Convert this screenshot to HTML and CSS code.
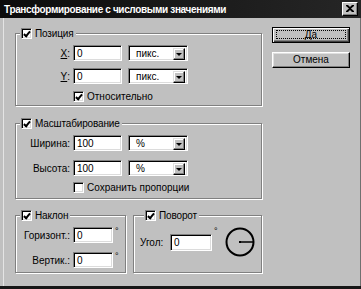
FILE: index.html
```html
<!DOCTYPE html>
<html lang="ru">
<head>
<meta charset="utf-8">
<title>Трансформирование с числовыми значениями</title>
<link rel="stylesheet" href="styles.css">
</head>
<body>
<div class="window">
  <div class="titlebar">
    <span class="title">Трансформирование с числовыми значениями</span>
    <span class="close"><svg width="8" height="7" viewBox="0 0 8 7"><path d="M0 0h2l2 2 2-2h2v1L5 3.5 8 6v1H6L4 5 2 7H0V6l3-2.5L0 1z" fill="#000"/></svg></span>
  </div>
  <div class="body">
    <div class="groups">
      <fieldset class="group g-pos">
        <legend class="legend"><span class="check on"></span><span>Позиция</span></legend>
        <div class="row">
          <span class="lab"><u>X</u>:</span>
          <span class="field f-wide">0</span>
          <span class="combo"><span class="combo-val">пикс.</span><span class="combo-btn"><i class="tri"></i></span></span>
        </div>
        <div class="row">
          <span class="lab"><u>Y</u>:</span>
          <span class="field f-wide">0</span>
          <span class="combo"><span class="combo-val">пикс.</span><span class="combo-btn"><i class="tri"></i></span></span>
        </div>
        <div class="row row-check">
          <span class="check on"></span><span>Относительно</span>
        </div>
      </fieldset>
      <fieldset class="group g-scale">
        <legend class="legend"><span class="check on"></span><span>Масштабирование</span></legend>
        <div class="row">
          <span class="lab">Ширина:</span>
          <span class="field f-wide">100</span>
          <span class="combo"><span class="combo-val">%</span><span class="combo-btn"><i class="tri"></i></span></span>
        </div>
        <div class="row">
          <span class="lab">Высота:</span>
          <span class="field f-wide">100</span>
          <span class="combo"><span class="combo-val">%</span><span class="combo-btn"><i class="tri"></i></span></span>
        </div>
        <div class="row row-check">
          <span class="check"></span><span>Сохранить пропорции</span>
        </div>
      </fieldset>
      <div class="pair">
        <fieldset class="group g-skew">
          <legend class="legend"><span class="check on"></span><span>Наклон</span></legend>
          <div class="row">
            <span class="lab">Горизонт.:</span>
            <span class="field f-short">0</span>
            <span class="deg">°</span>
          </div>
          <div class="row">
            <span class="lab">Вертик.:</span>
            <span class="field f-short">0</span>
            <span class="deg">°</span>
          </div>
        </fieldset>
        <fieldset class="group g-rot">
          <legend class="legend"><span class="check on"></span><span>Поворот</span></legend>
          <div class="row row-angle">
            <span class="lab lab-angle">Угол:</span>
            <span class="field f-angle">0</span>
            <span class="deg">°</span>
            <svg class="dial" width="30" height="30" viewBox="0 0 30 30"><circle cx="15" cy="15" r="13.5" fill="none" stroke="#000" stroke-width="2"/><path d="M15 15H28" stroke="#000" stroke-width="1.5"/><rect x="14" y="14" width="2" height="2" fill="#000"/></svg>
          </div>
        </fieldset>
      </div>
    </div>
    <div class="buttons">
      <button class="btn btn-default"><span class="focus"><u>Д</u>а</span></button>
      <button class="btn"><span class="plain">Отмена</span></button>
    </div>
  </div>
</div>
</body>
</html>
```
FILE: styles.css
```css
html, body {
  margin: 0;
  padding: 0;
}
body {
  background: #1a1a1a;
  font-family: "Liberation Sans", Arial, sans-serif;
  font-size: 10px;
  color: #000;
}
.window {
  width: 361px;
  height: 289px;
  overflow: hidden;
  background: #c0c0c0;
  display: flex;
  flex-direction: column;
  box-sizing: border-box;
  border-bottom: 3px solid #161616;
}
.titlebar {
  height: 18px;
  flex: none;
  display: flex;
  align-items: center;
  background: linear-gradient(90deg, #0c0c0c, #1c1c1c 60%, #262626);
  padding-left: 4px;
}
.title {
  color: #fff;
  font-weight: bold;
  font-size: 10px;
  letter-spacing: -0.35px;
  white-space: nowrap;
}
.close {
  margin-left: auto;
  margin-right: 3px;
  width: 16px;
  height: 14px;
  box-sizing: border-box;
  background: #c0c0c0;
  border: 1px solid;
  border-color: #fff #000 #000 #fff;
  box-shadow: inset -1px -1px 0 #808080;
  display: flex;
  align-items: center;
  justify-content: center;
}
.close svg { display: block; margin-top: -1px; margin-left: -1px; }
.body {
  flex: 1;
  display: flex;
  align-items: flex-start;
  padding: 9px 0 0 15px;
  box-shadow: inset 3px 0 0 #c0c0c0, inset 4px 0 0 #e4e4e4, inset -1px 0 0 #707070;
}
.groups {
  width: 248px;
  display: flex;
  flex-direction: column;
}
.group {
  margin: 0;
  min-width: 0;
  box-sizing: border-box;
  border: 1px solid #808080;
  box-shadow: 1px 1px 0 #fff, inset 1px 1px 0 #fff;
  padding: 5px 0 4px 0;
}
.g-pos { width: 247px; padding-bottom: 2px; }
.g-scale { width: 247px; margin-top: 11px; }
.pair {
  display: flex;
  margin-top: 10px;
  gap: 7px;
}
.g-skew { width: 111px; }
.g-rot { width: 129px; padding-left: 6px; }
.legend {
  display: flex;
  align-items: center;
  height: 13px;
  padding: 0 2px 0 1px;
  margin-left: 4px;
  background: #c0c0c0;
  white-space: nowrap;
  letter-spacing: -0.15px;
}
.legend .check { margin-right: 3px; }
.check {
  width: 11px;
  height: 11px;
  box-sizing: border-box;
  flex: none;
  background: #fff;
  border: 1px solid;
  border-color: #808080 #fff #fff #808080;
  box-shadow: inset 1px 1px 0 #000, inset -1px -1px 0 #dcdcdc;
  position: relative;
}
.check.on::after {
  content: "";
  position: absolute;
  left: 2px;
  top: 1px;
  width: 2px;
  height: 5px;
  border: solid #000;
  border-width: 0 2px 2px 0;
  transform: translate(1px, 0) rotate(40deg);
}
.row {
  display: flex;
  align-items: center;
  height: 16px;
  white-space: nowrap;
}
.row + .row { margin-top: 7px; }
.g-scale .row + .row { margin-top: 9px; }
.g-scale .row-check { margin-top: 5px !important; }
.g-skew .row + .row { margin-top: 9px; }
.row-check {
  height: 13px;
  margin-top: 6px !important;
  padding-left: 57px;
}
.row-check .check { margin-right: 3px; }
.lab {
  width: 54px;
  flex: none;
  display: flex;
  justify-content: flex-end;
  margin-right: 3px;
}
.lab-angle {
  width: 27px;
  justify-content: flex-start;
}
.field {
  height: 16px;
  box-sizing: border-box;
  background: #fff;
  border: 1px solid;
  border-color: #808080 #fff #fff #808080;
  box-shadow: inset 1px 1px 0 #000, inset -1px -1px 0 #dcdcdc;
  padding: 1px 0 0 3px;
  line-height: 13px;
  flex: none;
}
.f-wide { width: 49px; }
.f-short { width: 40px; }
.f-angle { width: 42px; height: 17px; }
.combo {
  margin-left: 6px;
  width: 60px;
  height: 16px;
  box-sizing: border-box;
  background: #fff;
  border: 1px solid;
  border-color: #808080 #fff #fff #808080;
  box-shadow: inset 1px 1px 0 #000, inset -1px -1px 0 #dcdcdc;
  display: flex;
  padding: 2px 2px 1px 2px;
  flex: none;
}
.combo-val {
  flex: 1;
  padding-left: 5px;
  line-height: 12px;
}
.combo-btn {
  width: 12px;
  height: 12px;
  box-sizing: border-box;
  background: #c0c0c0;
  border: 1px solid;
  border-color: #dfdfdf #000 #000 #dfdfdf;
  box-shadow: inset -1px -1px 0 #808080, inset 1px 1px 0 #fff;
  display: flex;
  align-items: center;
  justify-content: center;
}
.tri {
  width: 0;
  height: 0;
  border-left: 3px solid transparent;
  border-right: 3px solid transparent;
  border-top: 3px solid #000;
}
.deg {
  align-self: flex-start;
  font-size: 9px;
  line-height: 9px;
  margin-left: 2px;
}
.row-angle { height: 30px; }
.dial { margin-left: 7px; display: block; flex: none; }
.buttons {
  margin-left: 9px;
  display: flex;
  flex-direction: column;
  gap: 9px;
}
.btn {
  width: 78px;
  height: 16px;
  box-sizing: border-box;
  margin: 0;
  padding: 0;
  background: #c0c0c0;
  font: inherit;
  color: #000;
  border: 1px solid;
  border-color: #fff #000 #000 #fff;
  box-shadow: inset -1px -1px 0 #808080, inset 1px 1px 0 #dfdfdf;
  display: flex;
  align-items: stretch;
  justify-content: center;
}
.btn-default {
  border: 1px solid #000;
  box-shadow: inset 1px 1px 0 #fff, inset -1px -1px 0 #404040, inset -2px -2px 0 #808080;
  padding: 2px 3px 3px 3px;
}
.focus {
  flex: 1;
  border: 1px dotted #000;
  display: flex;
  align-items: center;
  justify-content: center;
  line-height: 9px;
}
.plain {
  display: flex;
  align-items: center;
  line-height: 12px;
}
```
